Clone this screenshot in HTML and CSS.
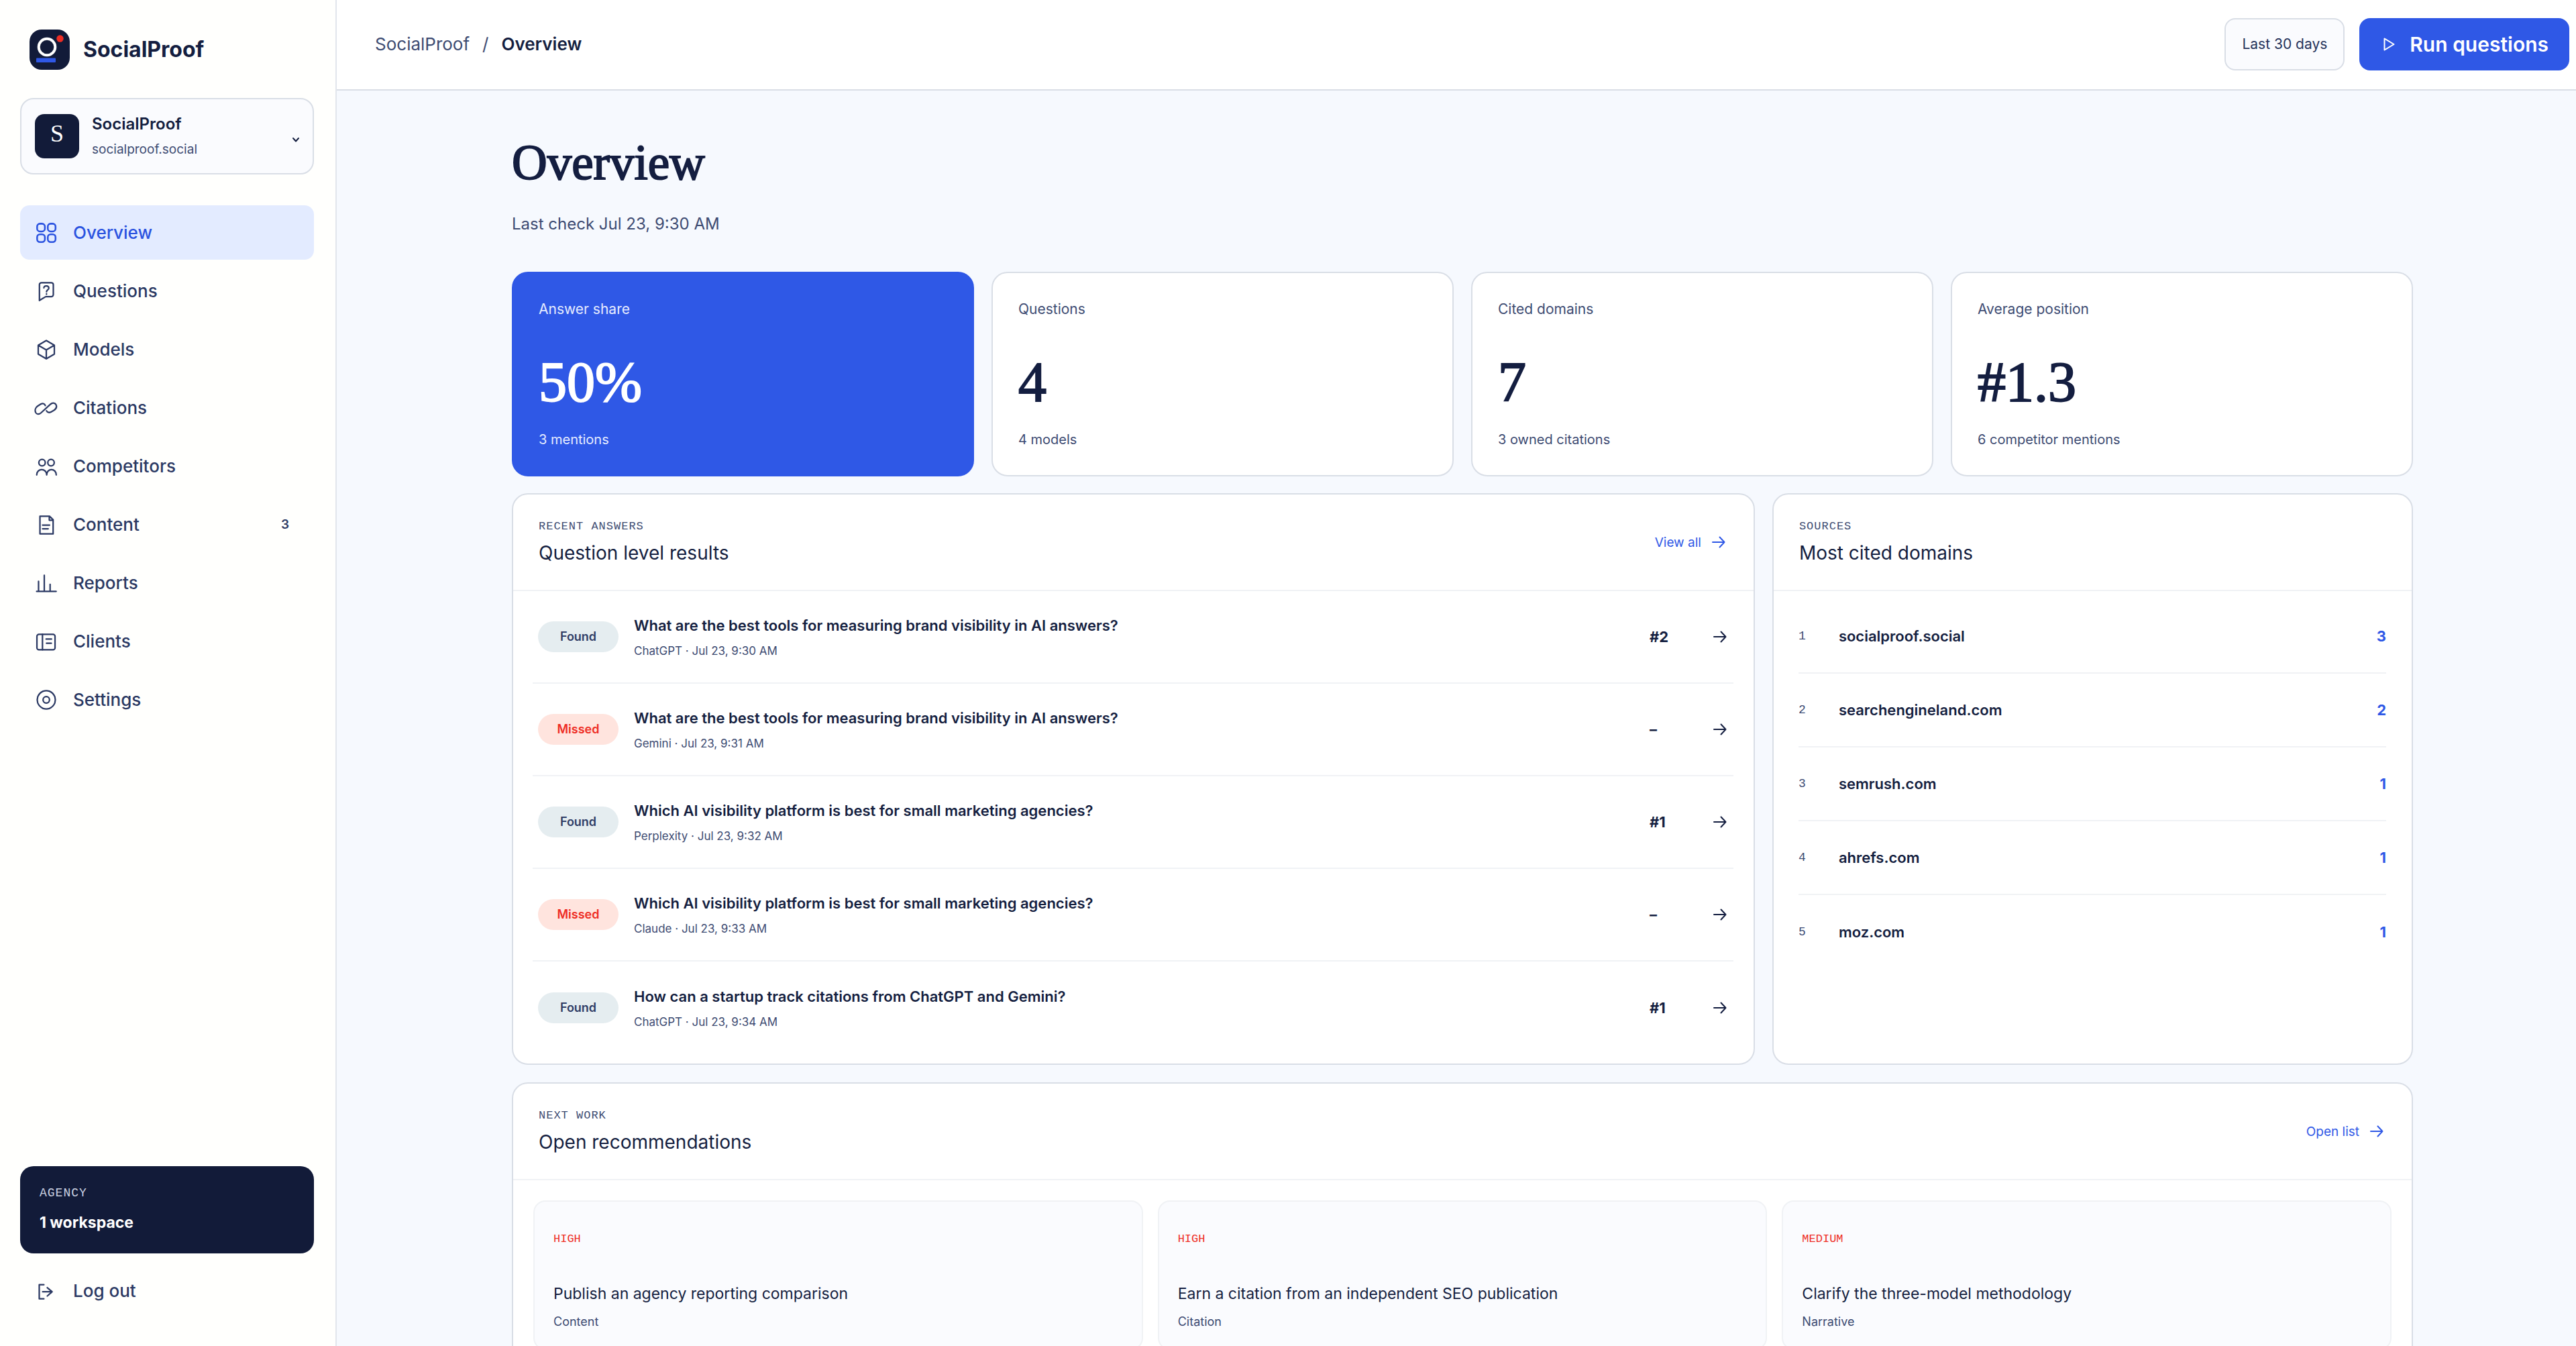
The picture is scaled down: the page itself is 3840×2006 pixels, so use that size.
FILE: index.html
```html
<!DOCTYPE html>
<html lang="en">

<head>
    <meta charset="UTF-8">
    <meta name="viewport" content="width=device-width, initial-scale=1.0">
    <title>Overview - SocialProof</title>
    <link rel="stylesheet" href="styles.css">
</head>

<body>
    <!-- shared arrow, used by the panel links and the result rows -->
    <svg class="sprite" aria-hidden="true">
        <symbol id="arrow" viewBox="0 0 20 20">
            <path d="M1 10h17.500M11.500 2.500l7 7.500-7 7.500" />
        </symbol>
    </svg>

    <div class="app">
        <aside class="sidebar">
            <a class="brand" href="#">
                <svg class="logo" viewBox="0 0 60 60" aria-hidden="true">
                    <rect width="60" height="60" rx="18" fill="#121b39" />
                    <circle cx="26" cy="26" r="12.300" fill="none" stroke="#fff" stroke-width="4" />
                    <circle cx="45.500" cy="13.500" r="5.200" fill="#ee2d24" />
                    <rect x="10" y="42.500" width="29" height="6.500" rx="1" fill="#2f58e6" />
                </svg>
                <span>SocialProof</span>
            </a>

            <button class="workspace" type="button">
                <span class="avatar">S</span>
                <span class="workspace-text">
                    <strong>SocialProof</strong>
                    <small>socialproof.social</small>
                </span>
                <svg class="chevron" viewBox="0 0 20 20" aria-hidden="true"><path d="M11 13l4 4.500 4-4.500" /></svg>
            </button>

            <nav class="nav">
                <a class="nav-item active" href="#">
                    <svg class="icon" viewBox="0 0 24 24"><rect x="2.900" y="2.900" width="7.700" height="7.700" rx="2.800" /><rect x="13.500" y="2.900" width="7.700" height="7.700" rx="2.800" /><rect x="2.900" y="13.500" width="7.700" height="7.700" rx="2.800" /><rect x="13.500" y="13.500" width="7.700" height="7.700" rx="2.800" /></svg>
                    Overview
                </a>
                <a class="nav-item" href="#">
                    <svg class="icon" viewBox="0 0 24 24"><path d="M5.200 21.200V5.500a2 2 0 0 1 2-2h9.800a2 2 0 0 1 2 2v9.900a2 2 0 0 1-2 2h-5.600z" /><path d="M9.600 8.700c0-2.700 4.900-2.700 4.900.200 0 1.900-2.300 1.900-2.300 3.700M12.200 14.600v.400" /></svg>
                    Questions
                </a>
                <a class="nav-item" href="#">
                    <svg class="icon" viewBox="0 0 24 24"><path d="M12 3l8 4.600v8.900l-8 4.700-8-4.700V7.600zM4.300 7.800l7.700 4.500 7.700-4.500M12 12.300v8.500" /></svg>
                    Models
                </a>
                <a class="nav-item" href="#">
                    <svg class="icon" viewBox="0 0 24 24"><path d="M11 9.600C10.400 8 8.800 7 6.800 8L3.600 10C1 11.600.600 14.400 1.400 16.400C2.400 18.600 4.800 18.600 6.600 17L16 8.400C17.800 6.800 20.400 6.600 21.600 8.600C22.600 10.600 22 12.800 19.600 14.400L17 15.800C15 16.900 13.200 16.600 12.200 14.800" /></svg>
                    Citations
                </a>
                <a class="nav-item" href="#">
                    <svg class="icon" viewBox="0 0 24 24"><circle cx="7.800" cy="8.300" r="3.200" /><circle cx="16.700" cy="8.300" r="3.200" /><path d="M2.500 20.500c0-7 9.900-7 9.900 0 0-7 9.500-7 9.500 0" /></svg>
                    Competitors
                </a>
                <a class="nav-item" href="#">
                    <svg class="icon" viewBox="0 0 24 24"><path d="M5.700 3.500h9.500l3.600 3.600v14H5.700zM15 3.500v4h3.800M8.300 12.400h7M8.300 16h5.600" /></svg>
                    Content
                    <span class="count">3</span>
                </a>
                <a class="nav-item" href="#">
                    <svg class="icon" viewBox="0 0 24 24"><path d="M2.400 20.300h19.400M4.300 20.300V10.200M10 20.300V4.200M15.800 20.300v-7.100" /></svg>
                    Reports
                </a>
                <a class="nav-item" href="#">
                    <svg class="icon" viewBox="0 0 24 24"><rect x="2.700" y="4.900" width="18" height="15.400" rx="2" /><path d="M8.200 4.900v15.400M11.800 9.600h5.400M12.200 13.800h4.800" /></svg>
                    Clients
                </a>
                <a class="nav-item" href="#">
                    <svg class="icon" viewBox="0 0 24 24"><path d="M8.900 3.400Q12 2.400 15.100 3.400Q18.900 5.100 20.500 8.900Q21.500 12 20.500 15.100Q18.900 18.900 15.100 20.600Q12 21.600 8.900 20.600Q5.100 18.900 3.500 15.100Q2.500 12 3.500 8.900Q5.100 5.100 8.900 3.400z" /><circle cx="12" cy="12" r="3.200" /></svg>
                    Settings
                </a>
            </nav>

            <div class="plan">
                <span>AGENCY</span>
                <strong>1 workspace</strong>
            </div>
            <button class="nav-item logout" type="button">
                <svg class="icon" viewBox="0 0 24 24"><path d="M9.600 5.800H5v14h4.600M8.400 12.800h9M13 8.700l4.800 4.100-4.800 4.200" /></svg>
                Log out
            </button>
        </aside>

        <div class="page">
            <header class="topbar">
                <div class="crumbs">
                    <a href="#">SocialProof</a>
                    <span>/</span>
                    <strong>Overview</strong>
                </div>
                <button class="range" type="button">Last 30 days</button>
                <button class="run" type="button">
                    <svg viewBox="0 0 28 28" aria-hidden="true"><path d="M6.500 5.500l14 8.500-14 8.500z" /></svg>
                    Run questions
                </button>
            </header>

            <main class="content">
                <h1>Overview</h1>
                <p class="last-check">Last check Jul 23, 9:30 AM</p>

                <section class="stats">
                    <article class="stat primary">
                        <span class="stat-label">Answer share</span>
                        <strong class="stat-value">50%</strong>
                        <span class="stat-note">3 mentions</span>
                    </article>
                    <article class="stat">
                        <span class="stat-label">Questions</span>
                        <strong class="stat-value">4</strong>
                        <span class="stat-note">4 models</span>
                    </article>
                    <article class="stat">
                        <span class="stat-label">Cited domains</span>
                        <strong class="stat-value">7</strong>
                        <span class="stat-note">3 owned citations</span>
                    </article>
                    <article class="stat">
                        <span class="stat-label">Average position</span>
                        <strong class="stat-value">#1.3</strong>
                        <span class="stat-note">6 competitor mentions</span>
                    </article>
                </section>

                <div class="columns">
                    <section class="panel">
                        <div class="panel-head">
                            <div>
                                <p class="eyebrow">RECENT ANSWERS</p>
                                <h2>Question level results</h2>
                            </div>
                            <a class="panel-link" href="#">View all <svg class="arrow"><use href="#arrow" /></svg></a>
                        </div>
                        <div class="results">
                            <a class="result" href="#">
                                <span class="badge found">Found</span>
                                <span class="result-text"><strong>What are the best tools for measuring brand visibility in AI answers?</strong><small>ChatGPT · Jul 23, 9:30 AM</small></span>
                                <b>#2</b>
                                <svg class="arrow"><use href="#arrow" /></svg>
                            </a>
                            <a class="result" href="#">
                                <span class="badge missed">Missed</span>
                                <span class="result-text"><strong>What are the best tools for measuring brand visibility in AI answers?</strong><small>Gemini · Jul 23, 9:31 AM</small></span>
                                <b>–</b>
                                <svg class="arrow"><use href="#arrow" /></svg>
                            </a>
                            <a class="result" href="#">
                                <span class="badge found">Found</span>
                                <span class="result-text"><strong>Which AI visibility platform is best for small marketing agencies?</strong><small>Perplexity · Jul 23, 9:32 AM</small></span>
                                <b>#1</b>
                                <svg class="arrow"><use href="#arrow" /></svg>
                            </a>
                            <a class="result" href="#">
                                <span class="badge missed">Missed</span>
                                <span class="result-text"><strong>Which AI visibility platform is best for small marketing agencies?</strong><small>Claude · Jul 23, 9:33 AM</small></span>
                                <b>–</b>
                                <svg class="arrow"><use href="#arrow" /></svg>
                            </a>
                            <a class="result" href="#">
                                <span class="badge found">Found</span>
                                <span class="result-text"><strong>How can a startup track citations from ChatGPT and Gemini?</strong><small>ChatGPT · Jul 23, 9:34 AM</small></span>
                                <b>#1</b>
                                <svg class="arrow"><use href="#arrow" /></svg>
                            </a>
                        </div>
                    </section>

                    <section class="panel">
                        <div class="panel-head">
                            <div>
                                <p class="eyebrow">SOURCES</p>
                                <h2>Most cited domains</h2>
                            </div>
                        </div>
                        <ol class="domains">
                            <li><span>1</span><strong>socialproof.social</strong><b>3</b></li>
                            <li><span>2</span><strong>searchengineland.com</strong><b>2</b></li>
                            <li><span>3</span><strong>semrush.com</strong><b>1</b></li>
                            <li><span>4</span><strong>ahrefs.com</strong><b>1</b></li>
                            <li><span>5</span><strong>moz.com</strong><b>1</b></li>
                        </ol>
                    </section>
                </div>

                <section class="panel">
                    <div class="panel-head">
                        <div>
                            <p class="eyebrow">NEXT WORK</p>
                            <h2>Open recommendations</h2>
                        </div>
                        <a class="panel-link" href="#">Open list <svg class="arrow"><use href="#arrow" /></svg></a>
                    </div>
                    <div class="tasks">
                        <article class="task">
                            <span class="priority">HIGH</span>
                            <h3>Publish an agency reporting comparison</h3>
                            <p>Content</p>
                        </article>
                        <article class="task">
                            <span class="priority">HIGH</span>
                            <h3>Earn a citation from an independent SEO publication</h3>
                            <p>Citation</p>
                        </article>
                        <article class="task">
                            <span class="priority">MEDIUM</span>
                            <h3>Clarify the three-model methodology</h3>
                            <p>Narrative</p>
                        </article>
                    </div>
                </section>
            </main>
        </div>
    </div>
</body>

</html>
```
FILE: styles.css
```css
:root {
    --ink: #141e40;
    --muted: #3d4b72;
    --blue: #2f58e6;
    --red: #ee2d24;
    --line: #d9dee6;
    --line-soft: #f0f2f5;
    --soft: #fafbfe;
}

* {
    box-sizing: border-box;
}

body {
    margin: 0;
    color: var(--ink);
    font-family: Inter, "Liberation Sans", Arial, sans-serif;
}

h1, h2, h3, p, ol {
    margin: 0;
    padding: 0;
}

a {
    color: inherit;
    text-decoration: none;
}

button {
    font-family: inherit;
    color: inherit;
    cursor: pointer;
}

svg {
    flex: none;
    fill: none;
    stroke: currentColor;
    stroke-linecap: round;
    stroke-linejoin: round;
}

.sprite {
    display: none;
}

.app {
    display: flex;
    height: 100vh;
}

/* sidebar */
.sidebar {
    display: flex;
    flex-direction: column;
    flex: none;
    width: 502px;
    padding: 44px 32px 42px 30px;
    background: #fffffd;
    border-right: 2px solid #e2e6ec;
}

.brand {
    display: flex;
    align-items: center;
    gap: 20px;
    padding-left: 14px;
    font-size: 32px;
    font-weight: 700;
    line-height: 58px;
}

.logo {
    width: 60px;
    height: 60px;
    stroke: none;
}

.workspace {
    display: flex;
    align-items: center;
    gap: 19px;
    margin-top: 42px;
    padding: 22px 20px;
    background: var(--soft);
    border: 2px solid var(--line);
    border-radius: 20px;
    text-align: left;
}

.avatar {
    width: 66px;
    height: 66px;
    background: #121b39;
    border-radius: 14px;
    color: #fff;
    font: 36px/58px "Liberation Serif", "Times New Roman", serif;
    text-align: center;
}

.workspace-text {
    display: flex;
    flex: 1;
    flex-direction: column;
    gap: 12px;
}

.workspace-text strong {
    font-size: 24px;
    font-weight: 600;
    line-height: 28px;
}

.workspace-text small {
    color: var(--muted);
    font-size: 19px;
    line-height: 24px;
}

.chevron {
    width: 20px;
    height: 20px;
    stroke-width: 2;
}

.nav {
    display: flex;
    flex-direction: column;
    gap: 6px;
    margin-top: 46px;
}

.nav-item {
    display: flex;
    align-items: center;
    gap: 22px;
    height: 81px;
    padding: 0 21px;
    background: none;
    border: none;
    border-radius: 14px;
    color: #2b3963;
    font-size: 26px;
    font-weight: 500;
}

.nav-item.active {
    background: #e3ebff;
    color: #2b53e0;
}

.icon {
    width: 36px;
    height: 36px;
    stroke-width: 1.5;
}

.active .icon {
    stroke-width: 1.7;
}

.count {
    margin-left: auto;
    padding-right: 16px;
    font-size: 19px;
    font-weight: 600;
}

.plan {
    display: flex;
    flex-direction: column;
    gap: 18px;
    margin-top: auto;
    padding: 29px 29px 31px;
    background: #121b39;
    border-radius: 20px;
    color: #fff;
}

.plan span {
    color: #cdd3e2;
    font: 18px/22px "Liberation Mono", monospace;
    letter-spacing: 1px;
}

.plan strong {
    font-size: 23px;
    line-height: 30px;
}

.logout {
    margin-top: 15px;
}

/* top bar */
.page {
    display: flex;
    flex: 1;
    flex-direction: column;
    min-width: 0;
}

.topbar {
    display: flex;
    flex: none;
    align-items: center;
    gap: 22px;
    height: 135px;
    padding: 0 10px 2px 57px;
    background: #fff;
    border-bottom: 2px solid var(--line);
}

.crumbs {
    display: flex;
    flex: 1;
    gap: 19px;
    color: var(--muted);
    font-size: 26px;
}

.crumbs strong {
    color: var(--ink);
    font-weight: 600;
}

.range {
    height: 78px;
    padding: 0 24px;
    background: var(--soft);
    border: 2px solid var(--line);
    border-radius: 16px;
    color: #24325a;
    font-size: 21px;
}

.run {
    display: flex;
    align-items: center;
    gap: 16px;
    height: 78px;
    padding: 0 31px;
    background: var(--blue);
    border: none;
    border-radius: 16px;
    color: #fff;
    font-size: 30px;
    font-weight: 600;
}

.run svg {
    width: 28px;
    height: 28px;
    stroke-width: 2;
}

/* content */
.content {
    flex: 1;
    padding: 71px 243px 0 261px;
    background: #f6f9fe;
    overflow-y: auto;
    scrollbar-width: none;
}

h1 {
    font: 73px/74px "Liberation Serif", "Times New Roman", serif;
    -webkit-text-stroke: 2px currentColor;
}

.last-check {
    margin: 38px 0 55px;
    color: var(--muted);
    font-size: 24px;
    line-height: 32px;
}

.stats {
    display: grid;
    grid-template-columns: repeat(4, 1fr);
    gap: 26px;
}

.stat {
    display: flex;
    flex-direction: column;
    padding: 40px 38px;
    background: #fff;
    border: 2px solid var(--line);
    border-radius: 24px;
}

.stat-label {
    color: var(--muted);
    font-size: 21px;
    line-height: 28px;
}

.stat-value {
    margin: 54px 0 31px;
    font: 84px/82px "Liberation Serif", "Times New Roman", serif;
    -webkit-text-stroke: 2px currentColor;
}

.stat-note {
    color: var(--muted);
    font-size: 20px;
    line-height: 26px;
}

.stat.primary {
    background: var(--blue);
    border-color: var(--blue);
    color: #fff;
}

.primary .stat-label, .primary .stat-note {
    color: #e6ecff;
}

.columns {
    display: grid;
    grid-template-columns: 1.94fr 1fr;
    gap: 26px;
    margin: 25px 0 26px;
}

.panel {
    background: #fff;
    border: 2px solid var(--line);
    border-radius: 24px;
}

.panel-head {
    display: flex;
    align-items: center;
    justify-content: space-between;
    height: 144px;
    padding: 0 42px 0 38px;
    border-bottom: 2px solid var(--line-soft);
}

.eyebrow {
    margin-bottom: 10px;
    color: var(--muted);
    font: 17px/22px "Liberation Mono", monospace;
    letter-spacing: 1px;
}

h2 {
    font-size: 28px;
    font-weight: 400;
    line-height: 36px;
}

.panel-link {
    display: flex;
    align-items: center;
    gap: 16px;
    color: var(--blue);
    font-size: 19px;
}

.arrow {
    width: 20px;
    height: 20px;
    stroke-width: 2;
}

.results {
    padding: 0 30px 14px 29px;
}

.result {
    display: grid;
    grid-template-columns: 120px 1fr 72px 20px;
    align-items: center;
    gap: 23px;
    height: 138px;
    padding: 0 10px 0 8px;
    border-bottom: 2px solid var(--line-soft);
}

.result:last-child {
    border-bottom: none;
}

.badge {
    border-radius: 23px;
    font-size: 18px;
    font-weight: 600;
    line-height: 46px;
    text-align: center;
}

.badge.found {
    background: #e5edf0;
    color: #2f3d66;
}

.badge.missed {
    background: #ffe4de;
    color: var(--red);
}

.result-text {
    display: flex;
    flex-direction: column;
    gap: 12px;
}

.result-text strong {
    font-size: 22px;
    font-weight: 600;
    line-height: 30px;
}

.result-text small {
    color: var(--muted);
    font-size: 17px;
    line-height: 22px;
}

.result b {
    font-size: 22px;
}

.domains {
    padding: 13px 38px 0 37px;
    list-style: none;
}

.domains li {
    display: flex;
    align-items: center;
    height: 110px;
    border-bottom: 2px solid var(--line-soft);
    font-size: 22px;
}

.domains li:last-child {
    border-bottom: none;
}

.domains span {
    width: 60px;
    color: var(--muted);
    font: 18px "Liberation Mono", monospace;
}

.domains strong {
    flex: 1;
    font-weight: 600;
}

.domains b {
    color: var(--blue);
}

/* recommendations */
.tasks {
    display: grid;
    grid-template-columns: repeat(3, 1fr);
    gap: 22px;
    padding: 30px;
}

.task {
    padding: 45px 28px 28px;
    background: var(--soft);
    border: 2px solid var(--line-soft);
    border-radius: 18px;
}

.priority {
    display: block;
    color: var(--red);
    font: 17px/22px "Liberation Mono", monospace;
}

h3 {
    margin: 54px 0 14px;
    font-size: 23px;
    font-weight: 400;
    line-height: 32px;
}

.task p {
    color: var(--muted);
    font-size: 18px;
    line-height: 24px;
}
```
